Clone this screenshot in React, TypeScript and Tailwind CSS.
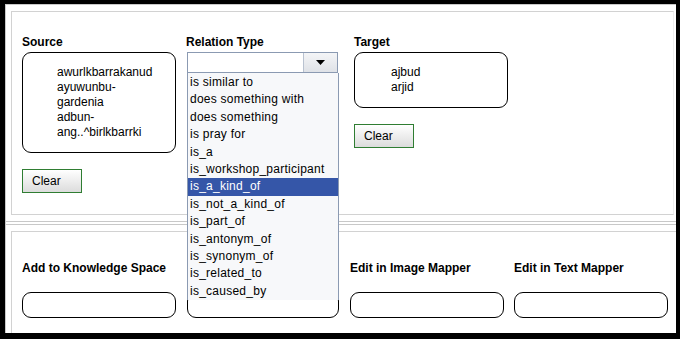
import React from "react";

const relations = [
  "is similar to",
  "does something with",
  "does something",
  "is pray for",
  "is_a",
  "is_workshop_participant",
  "is_a_kind_of",
  "is_not_a_kind_of",
  "is_part_of",
  "is_antonym_of",
  "is_synonym_of",
  "is_related_to",
  "is_caused_by",
];

const selected = "is_a_kind_of";

function Label({ children }: { children?: React.ReactNode }) {
  return <div className="h-[14px] text-[12px] leading-[14px] font-bold text-black whitespace-nowrap">{children}</div>;
}

function ClearButton() {
  return (
    <button className="w-[60px] h-[24px] border border-[#2f7d32] bg-gradient-to-b from-white to-[#dcdcdc] pl-[9px] text-left text-[12px] leading-[22px] text-black">
      Clear
    </button>
  );
}

function WordBox({ words, height, pad }: { words: string[]; height: string; pad: string }) {
  return (
    <div className={`w-[154px] ${height} ${pad} rounded-[9px] border border-black bg-white pt-[12px] text-[12px] leading-[15px] text-black`}>
      {words.map((w) => (
        <div key={w}>{w}</div>
      ))}
    </div>
  );
}

export default function App() {
  return (
    <div className="w-[680px] h-[339px] border-solid border-black border-t-4 border-l-[5px] border-r-4 border-b-[6px] bg-white font-['Liberation_Sans',Arial,sans-serif]">
      <div className="relative h-full flex flex-col border-t border-l border-[#c9c9c9]">
        {/* top panel */}
        <div className="pl-[5px] pt-[6px]">
          <div className="w-[663px] h-[204px] border border-[#d2d2d2] border-r-[#eeeeee] pl-[10px] pt-[23px] flex">
            <div className="w-[154px] flex flex-col">
              <Label>Source</Label>
              <div className="mt-[3px]">
                <WordBox
                  words={["awurlkbarrakanud", "ayuwunbu-", "gardenia", "adbun-", "ang..^birlkbarrki"]}
                  height="h-[101px]"
                  pad="pl-[34px]"
                />
              </div>
              <div className="mt-[15px]">
                <ClearButton />
              </div>
            </div>
            <div className="ml-[10px] w-[152px] flex flex-col">
              <Label>Relation Type</Label>
              <div className="mt-[3px] ml-[1px] h-[21px] flex border border-[#8b9ab2] bg-white">
                <div className="flex-1 border-r border-[#b9c2d0]" />
                <div className="w-[33px] flex items-center justify-center bg-gradient-to-b from-[#f4f5f7] to-[#dfe2e7]">
                  <svg width="9" height="5" viewBox="0 0 9 5">
                    <path d="M0 0 H9 L4.5 5 Z" fill="#000" />
                  </svg>
                </div>
              </div>
            </div>
            <div className="ml-[16px] w-[154px] flex flex-col">
              <Label>Target</Label>
              <div className="mt-[3px]">
                <WordBox words={["ajbud", "arjid"]} height="h-[56px]" pad="pl-[36px]" />
              </div>
              <div className="mt-[15px]">
                <ClearButton />
              </div>
            </div>
          </div>
        </div>

        {/* split divider */}
        <div className="mt-[6px] h-[4px] border-t border-b border-[#c8c8c8]" />

        {/* bottom panel */}
        <div className="pl-[5px] pt-[6px] flex-1 flex">
          <div className="w-[663px] flex-1 border-t border-l border-[#d2d2d2] pl-[10px] pt-[29px] flex">
            <div className="w-[154px] flex flex-col">
              <Label>Add to Knowledge Space</Label>
              <div className="mt-[17px] h-[26px] rounded-[9px] border border-black bg-white" />
            </div>
            <div className="ml-[11px] w-[152px] flex flex-col">
              <Label />
              <div className="mt-[17px] h-[26px] rounded-[9px] border border-black bg-white" />
            </div>
            <div className="ml-[11px] w-[154px] flex flex-col">
              <Label>Edit in Image Mapper</Label>
              <div className="mt-[17px] h-[26px] rounded-[9px] border border-black bg-white" />
            </div>
            <div className="ml-[10px] w-[154px] flex flex-col">
              <Label>Edit in Text Mapper</Label>
              <div className="mt-[17px] h-[26px] rounded-[9px] border border-black bg-white" />
            </div>
          </div>
        </div>

        {/* open combo popup */}
        <div className="absolute left-[181px] top-[68px] w-[152px] h-[227px] pt-[1px] border-l border-r border-[#8b9ab2] bg-[#f7f8fa] text-[12px] tracking-[0.25px] text-black">
          {relations.map((r) => (
            <div
              key={r}
              className={`h-[17.4px] leading-[17.4px] pl-[2px] whitespace-nowrap ${r === selected ? "bg-[#3556a8] text-white" : ""}`}
            >
              {r}
            </div>
          ))}
        </div>
      </div>
    </div>
  );
}
